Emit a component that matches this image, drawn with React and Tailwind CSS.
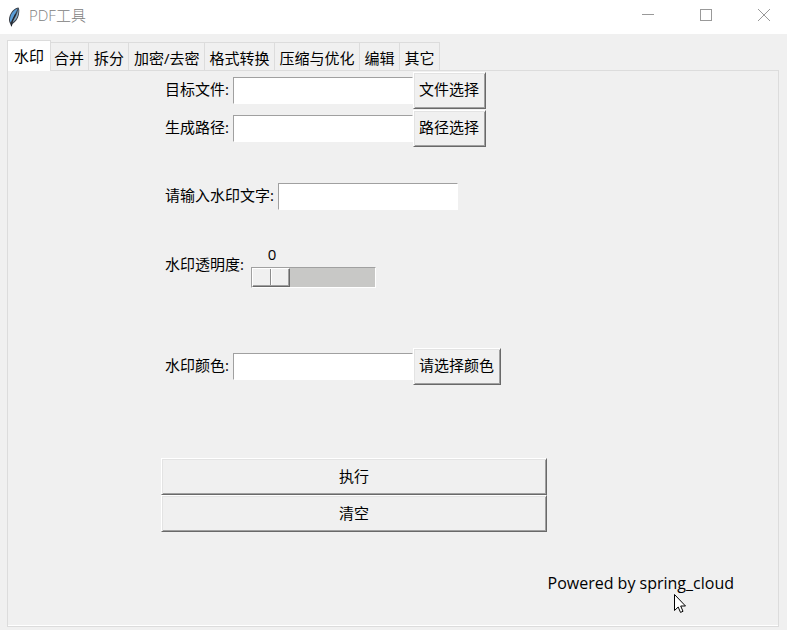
import React, { useState } from 'react';

const tabs = ['水印', '合并', '拆分', '加密/去密', '格式转换', '压缩与优化', '编辑', '其它'];

const raised =
  'h-[37px] pb-[2px] bg-[#f0f0f0] border border-t-white border-l-white border-r-[#696969] border-b-[#696969] shadow-[inset_1px_1px_0_#e3e3e3,inset_-1px_-1px_0_#a0a0a0]';

const FeatherIcon = () => (
  <svg width="14" height="20" viewBox="0 0 14 20" aria-hidden="true">
    <path d="M11.500 0.500C8 0.800 4.500 4 2.800 8.500C1.600 11.500 1.800 14.500 3 16.500L4.500 20L5.500 17C8.500 15 11 12 11.800 8C12.400 5 12.600 2 11.500 0.500Z" fill="#3a3f48" />
    <path d="M10.800 1.500C8 2.200 4.800 5.500 3.600 9.200C2.800 12 2.700 13.800 3.600 15.500C5.500 12 8.500 6.500 10.800 1.500Z" fill="#5a9ed8" />
    <path d="M11.300 2C10.200 7 7.800 11.500 5 15.800C8.400 13.800 10.200 10.800 11 7.500C11.600 5.500 11.700 4 11.300 2Z" fill="#86abc6" />
    <path d="M8.500 7C7.500 9.500 5.200 12.500 4.400 19" fill="none" stroke="#10161f" strokeWidth="0.800" />
  </svg>
);

const Cursor = () => (
  <svg className="absolute top-[21px] right-12" width="12" height="19" viewBox="0 0 12 19" aria-hidden="true">
    <path d="M0.500 0.500V16.500L4.200 13L6.500 18.400L9 17.300L6.700 12H11.500Z" fill="#fff" stroke="#000" />
  </svg>
);

const TitleBar = () => (
  <header className="flex h-[34px] items-center bg-white pl-[7px] text-[#808080]">
    <FeatherIcon />
    <h1 className="ml-2 pb-[5px] leading-5 font-light">PDF工具</h1>
    <div className="ml-auto flex gap-3 pb-1">
      <button aria-label="最小化" className="flex h-[30px] w-[46px] items-center justify-center">
        <svg width="12" height="12" shapeRendering="crispEdges"><path d="M0 5.500H12" stroke="#999" /></svg>
      </button>
      <button aria-label="最大化" className="flex h-[30px] w-[46px] items-center justify-center">
        <svg width="12" height="12" shapeRendering="crispEdges"><path d="M0.500 0.500H11.500V11.500H0.500Z" fill="none" stroke="#999" /></svg>
      </button>
      <button aria-label="关闭" className="flex h-[30px] w-[46px] items-center justify-center">
        <svg width="12" height="12"><path d="M0 0L12 12M12 0L0 12" stroke="#999" /></svg>
      </button>
    </div>
  </header>
);

const TextField = ({ id, label, button }) => (
  <div className="flex h-[38px] items-center">
    <label htmlFor={id} className="px-1 pb-[2px]">{label}</label>
    <input
      id={id}
      type="text"
      className="h-[27px] w-[180px] border border-t-[#a0a0a0] border-l-[#a0a0a0] border-r-white border-b-white bg-white px-1 outline-none"
    />
    {button && <button className={`pr-[6px] pl-[5px] ${raised}`}>{button}</button>}
  </div>
);

const App = () => {
  const [activeTab, setActiveTab] = useState('水印');
  const [opacity, setOpacity] = useState(0);

  return (
    <div className="flex min-h-screen flex-col bg-[#f0f0f0] font-['Open_Sans','Noto_Sans_CJK_SC',sans-serif] text-[15px] leading-5 text-black">
      <TitleBar />
      <main className="flex grow flex-col pt-[6px] pr-2 pb-[3px] pl-[7px]">
        <nav role="tablist" className="flex items-end">
          {tabs.map(tab => (
            <button
              key={tab}
              role="tab"
              aria-selected={tab === activeTab}
              onClick={() => setActiveTab(tab)}
              className={
                tab === activeTab
                  ? 'relative z-10 -mr-[2px] -mb-px h-[31px] border border-b-0 border-[#dcdcdc] bg-white px-[6px]'
                  : 'h-7 border-t border-r border-[#dcdcdc] pr-[4px] pl-[5px] pt-[2px]'
              }
            >
              {tab}
            </button>
          ))}
        </nav>

        <section className="flex grow flex-col border border-[#dcdcdc] shadow-[inset_0_-1px_0_#fff]">
          <form className="ml-[153px] w-[386px]" onSubmit={e => e.preventDefault()}>
            <TextField id="target" label="目标文件:" button="文件选择" />
            <TextField id="output" label="生成路径:" button="路径选择" />

            <div className="mt-[30px]">
              <TextField id="text" label="请输入水印文字:" />
            </div>

            {/* opacity slider */}
            <div className="mt-[29px] flex h-11 items-center">
              <label htmlFor="opacity" className="px-1 pb-1">水印透明度:</label>
              <div className="ml-[3px] flex flex-col">
                <output htmlFor="opacity" className="w-[42px] text-center">{opacity}</output>
                <input
                  id="opacity"
                  type="range"
                  min="0"
                  max="100"
                  value={opacity}
                  onChange={e => setOpacity(Number(e.target.value))}
                  className="mt-[3px] h-[21px] w-[125px] appearance-none border border-t-[#a0a0a0] border-l-[#a0a0a0] border-r-white border-b-white bg-[#c8c8c6] [&::-webkit-slider-thumb]:h-[19px] [&::-webkit-slider-thumb]:w-[38px] [&::-webkit-slider-thumb]:appearance-none [&::-webkit-slider-thumb]:border [&::-webkit-slider-thumb]:border-t-white [&::-webkit-slider-thumb]:border-r-[#696969] [&::-webkit-slider-thumb]:border-b-[#696969] [&::-webkit-slider-thumb]:border-l-white [&::-webkit-slider-thumb]:bg-[linear-gradient(to_right,#f0f0f0_17px,#8c8c8c_17px,#8c8c8c_18px,#fff_18px,#fff_19px,#f0f0f0_19px)] [&::-webkit-slider-thumb]:shadow-[inset_-1px_-1px_0_#a0a0a0]"
                />
              </div>
            </div>

            <div className="mt-[59px]">
              <TextField id="color" label="水印颜色:" button="请选择颜色" />
            </div>

            <div className="mt-[73px] flex flex-col">
              <button type="submit" className={raised}>执行</button>
              <button type="reset" onClick={() => setOpacity(0)} className={raised}>清空</button>
            </div>
          </form>

          <p className="relative mt-[41px] mr-11 self-end text-[16px]">
            Powered by spring_cloud
            <Cursor />
          </p>
        </section>
      </main>
    </div>
  );
};

export default App;
